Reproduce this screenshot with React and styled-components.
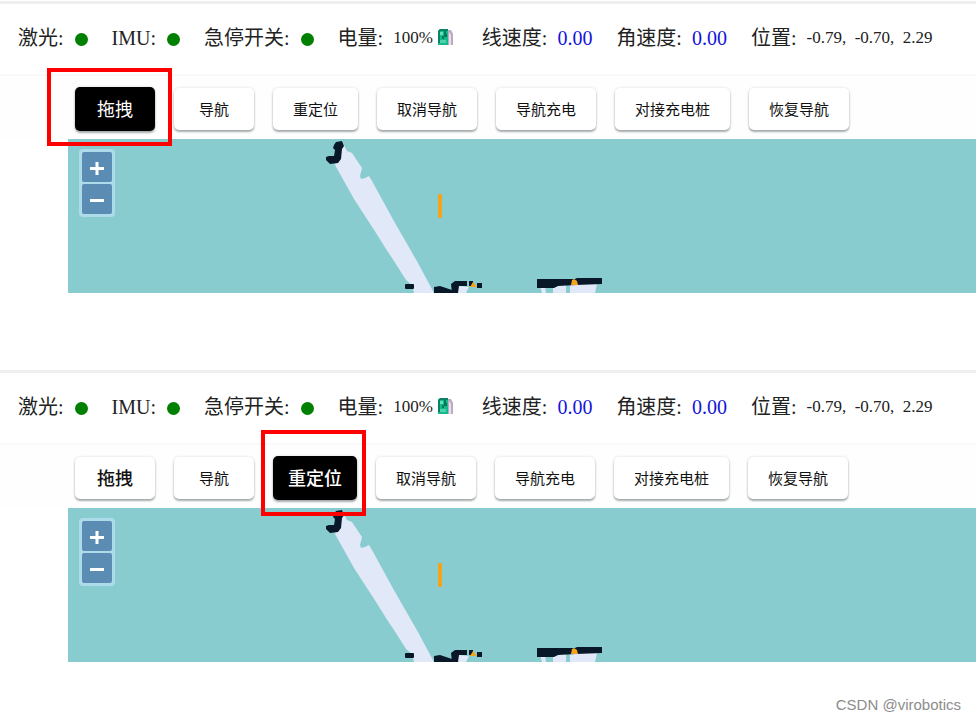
import React from 'react';
import styled, { createGlobalStyle } from 'styled-components';

const GlobalStyle = createGlobalStyle`
    body {
        margin: 0;
        background: #fff;
        color: #222;
        font-family: "Liberation Serif", "Noto Sans CJK SC", serif;
    }
    `

const Page = styled.main`
    display: flex;
    flex-direction: column;
    gap: 77px;
    padding-top: 1px;
    `

const Panel = styled.section`
    border-top: 3px solid #efeff1;
    `

const StatusBar = styled.header`
    display: flex;
    align-items: center;
    gap: 24px;
    height: 68px;
    padding: 0 18px 2px;
    border-bottom: 2px solid #f9f9f9;
    white-space: pre;
    `

const StatusItem = styled.div`
    display: flex;
    align-items: center;
    gap: 10px;
    font-size: 20px;
    line-height: 24px;
    `

const Dot = styled.span`
    width: 13px;
    height: 13px;
    margin: 3px 0 0 1px;
    border-radius: 50%;
    background: #008000;
    `

const Reading = styled.span`
    display: flex;
    align-items: center;
    gap: 5px;
    font-size: 17px;
    `

const Speed = styled.span`
    color: #1414dc;
    `

const Toolbar = styled.nav`
    display: flex;
    align-items: center;
    gap: 19px;
    height: 61px;
    padding: 2px 0 0 75px;
    background: #fefefe;
    `

const Tool = styled.div`
    position: relative;
    display: flex;
    `

const ToolButton = styled.button`
    min-width: 80px;
    height: ${({ $active }) => ($active ? '44px' : '42px')};
    padding: 2px ${({ $large }) => ($large ? '15px' : '20px')} 0;
    border: 0;
    border-radius: 5px;
    background: ${({ $active }) => ($active ? '#000' : '#fff')};
    color: ${({ $active }) => ($active ? '#fff' : '#111')};
    box-shadow: 0 2px 2px rgba(70, 85, 90, 0.45), 0 0 3px rgba(0, 0, 0, 0.14);
    font-family: "Liberation Sans", "Noto Sans CJK SC", sans-serif;
    font-size: ${({ $large }) => ($large ? '18px' : '15px')};
    font-weight: ${({ $bold }) => ($bold ? 500 : 400)};
    line-height: 24px;
    white-space: nowrap;
    cursor: pointer;
    `

const Highlight = styled.span`
    position: absolute;
    z-index: 1;
    inset: ${({ $inset }) => $inset};
    border: 4px solid #f00;
    pointer-events: none;
    `

const MapView = styled.div`
    position: relative;
    height: 154px;
    margin-left: 68px;
    overflow: hidden;
    background: #88ccd0;
    `

const ZoomControl = styled.div`
    position: absolute;
    top: 10px;
    left: 11px;
    display: grid;
    gap: 2px;
    padding: 3px;
    border-radius: 4px;
    background: #aedbe9;
    `

const ZoomButton = styled.button`
    display: grid;
    place-items: center;
    width: 30px;
    height: 30px;
    padding: 2px 0 0;
    border: 0;
    border-radius: 2px;
    background: #5b8db4;
    cursor: pointer;
    `

const Watermark = styled.footer`
    margin-top: 31px;
    padding-right: 15px;
    color: #8c8c8c;
    font-family: "Liberation Sans", sans-serif;
    font-size: 15px;
    line-height: 24px;
    text-align: right;
    `

const BatteryIcon = () => (
  <svg width="20" height="20" viewBox="0 0 20 20" aria-hidden="true">
    <path d="M10 2h3l2 4v11h-5z" fill="#b9abc0" />
    <path d="M11 4l2 3v10h-2z" fill="#e8e0eb" />
    <path d="M0 3l2-2h8v16H0z" fill="#16b98a" />
    <path d="M2 4h3v3H2z" fill="#66dfbd" />
    <path d="M6 3h2v3h1v3H6v2H4V8h2z" fill="#08785b" />
    <path d="M2 12h6v3H2z" fill="#4fd3ad" />
    <path d="M0 3l2-2h8v2H2v12H0z" fill="#0b8264" />
  </svg>
);

const MapDrawing = () => (
  <svg width="560" height="154" viewBox="0 0 560 154" aria-hidden="true">
    <path
      d="M274 2L279 12L284 14L294 29L292 37L293 40L297 39L301 37L304 42L327 84L350 124L366 154H346L344 146L338 141L326 122L318 110L308 94L286 60L267 26Z"
      fill="#e1e8f8"
    />
    <path
      d="M268 3L274 2L276 7L274 10L273 20L270 24L262 25L258 21L258 18L261 17L266 17L267 11L265 9L266 6Z"
      fill="#081828"
    />
    <rect x="370" y="55" width="4" height="24" rx="1" fill="#f2a51c" />
    <rect x="337" y="145" width="9" height="5" rx="1" fill="#081828" />
    <path d="M366 154V148L372 147L384 151L386 154Z" fill="#081828" />
    <path d="M388 154L391 147L401 148L398 154Z" fill="#e1e8f8" />
    <path d="M383 145L387 142H399V147H391L390 154H384Z" fill="#081828" />
    <path d="M401 142h4v5h-4zM409 144h5v5h-5z" fill="#081828" />
    <path d="M402 148L405 143L409 148Z" fill="#f2a51c" />
    <path d="M472 147h5l1 7h-4zM485 148l13-3v9h-13zM502 145h27l-2 9h-25z" fill="#e1e8f8" />
    <path d="M469 140L507 140L509 139H534V145L508 146L490 147L486 149H469Z" fill="#081828" />
    <path d="M503 146L504 141L506 140L509 142L510 146Z" fill="#f2a51c" />
  </svg>
);

const tools = ['拖拽', '导航', '重定位', '取消导航', '导航充电', '对接充电桩', '恢复导航'];

const ControlPanel = ({ active, large, bold, highlight }) => (
  <Panel>
    <StatusBar>
      <StatusItem>激光:<Dot /></StatusItem>
      <StatusItem>IMU:<Dot /></StatusItem>
      <StatusItem>急停开关:<Dot /></StatusItem>
      <StatusItem>
        电量:
        <Reading>100%<BatteryIcon /></Reading>
      </StatusItem>
      <StatusItem>线速度:<Speed>0.00</Speed></StatusItem>
      <StatusItem>角速度:<Speed>0.00</Speed></StatusItem>
      <StatusItem>
        位置:
        <Reading>{'-0.79,  -0.70,  2.29'}</Reading>
      </StatusItem>
    </StatusBar>
    <Toolbar>
      {tools.map((tool) => (
        <Tool key={tool}>
          <ToolButton
            type="button"
            aria-pressed={tool === active}
            $active={tool === active}
            $large={large.includes(tool)}
            $bold={bold && large.includes(tool)}
          >
            {tool}
          </ToolButton>
          {tool === active && <Highlight $inset={highlight} />}
        </Tool>
      ))}
    </Toolbar>
    <MapView>
      <MapDrawing />
      <ZoomControl>
        <ZoomButton type="button" aria-label="放大">
          <svg width="16" height="16" viewBox="0 0 16 16">
            <path d="M8 2v13M1 8.5h14" stroke="#fff" strokeWidth="3" />
          </svg>
        </ZoomButton>
        <ZoomButton type="button" aria-label="缩小">
          <svg width="16" height="16" viewBox="0 0 16 16">
            <path d="M1 8.5h14" stroke="#fff" strokeWidth="3" />
          </svg>
        </ZoomButton>
      </ZoomControl>
    </MapView>
  </Panel>
);

const App = () => {
  return (
    <>
      <GlobalStyle />
      <Page>
        <ControlPanel active="拖拽" large={['拖拽']} highlight="-19px -17px -15px -28px" />
        <ControlPanel
          active="重定位"
          large={['拖拽', '重定位']}
          bold
          highlight="-26px -9px -16px -12px"
        />
      </Page>
      <Watermark>CSDN @virobotics</Watermark>
    </>
  );
};

export default App;
